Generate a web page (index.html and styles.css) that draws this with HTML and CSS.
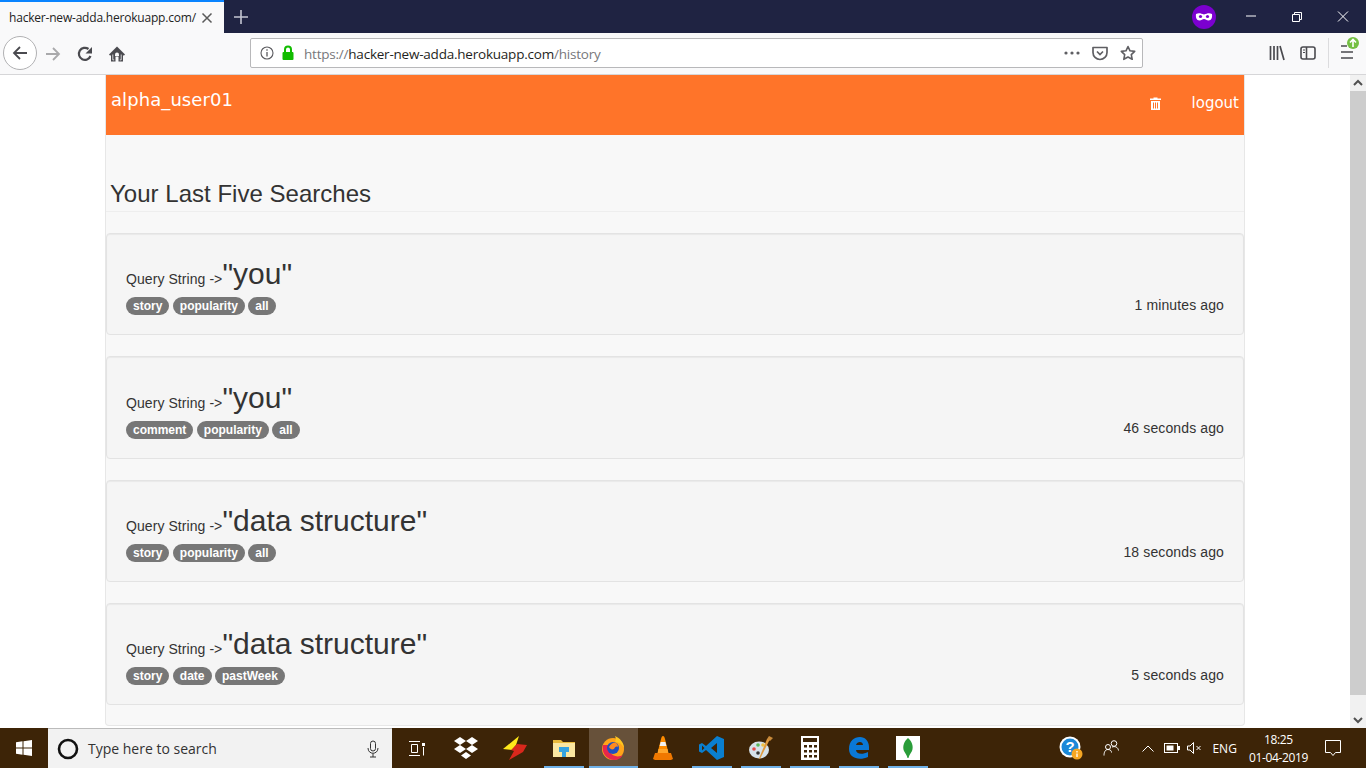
FILE: index.html
```html
<!DOCTYPE html>
<html lang="en">
<head>
    <meta charset="UTF-8">
    <title>hacker-new-adda.herokuapp.com/</title>
    <link rel="stylesheet" href="styles.css">
</head>
<body>
    <div class="tabbar">
        <div class="tab">
            <span class="tab-title">hacker-new-adda.herokuapp.com/</span>
            <svg class="tab-close" width="12" height="12" viewBox="0 0 12 12"><path d="M1.500 1.500l9 9M10.500 1.500l-9 9" stroke="#5a5a5a" stroke-width="1.500"/></svg>
        </div>
        <svg class="new-tab" width="16" height="16" viewBox="0 0 16 16"><path d="M8 1v14M1 8h14" stroke="#c4c6d2" stroke-width="1.600"/></svg>
        <div class="tabbar-right">
            <svg class="mask" width="24" height="24" viewBox="0 0 24 24"><circle cx="12" cy="12" r="12" fill="#7b00d0"/><path d="M4 9c3-1.500 5-.5 8 .5 3-1 5-2 8-.5 .5 3-.5 6.500-3.500 6.500-2 0-3-1.500-4.500-1.500s-2.500 1.500-4.500 1.500C4.500 15.500 3.500 12 4 9z" fill="#fff"/><circle cx="8.500" cy="11.500" r="1.600" fill="#7b00d0"/><circle cx="15.500" cy="11.500" r="1.600" fill="#7b00d0"/></svg>
            <svg width="46" height="32" viewBox="0 0 46 32"><path d="M18 15h10" stroke="#fff"/></svg>
            <svg width="46" height="32" viewBox="0 0 46 32"><path d="M18.500 13.500h7v7h-7zM20.500 13.500v-2h7v7h-2" fill="none" stroke="#fff"/></svg>
            <svg width="46" height="32" viewBox="0 0 46 32"><path d="M18 10.500l10 10M28 10.500l-10 10" stroke="#fff"/></svg>
        </div>
    </div>

    <div class="toolbar">
        <div class="back-btn">
            <svg width="18" height="18" viewBox="0 0 18 18"><path d="M16 9H3M9 3L3 9l6 6" fill="none" stroke="#4a4a4f" stroke-width="1.800"/></svg>
        </div>
        <svg class="tool-icon forward" width="18" height="18" viewBox="0 0 18 18"><path d="M2 9h13M9 3l6 6-6 6" fill="none" stroke="#a9a9ab" stroke-width="1.800"/></svg>
        <svg class="tool-icon" width="18" height="18" viewBox="0 0 18 18"><path d="M14.500 11A6 6 0 1 1 12.500 4" fill="none" stroke="#4a4a4f" stroke-width="2.200"/><path d="M16 2v6.500H9.500z" fill="#4a4a4f"/></svg>
        <svg class="tool-icon" width="18" height="18" viewBox="0 0 18 18"><path d="M9 1.500L17 9.500 15.800 10.800 15 10V16.500H10.500V11.500H7.500V16.500H3V10L2.200 10.800 1 9.500z" fill="#4a4a4f"/><path d="M7 11v-1.500a2 2 0 0 1 4 0V11z" fill="#f9f9fa"/><path d="M4.800 9.500v5.400h1.400M13.200 9.500v5.400h-1.400" fill="none" stroke="#f9f9fa" stroke-width=".8"/></svg>
        <div class="urlbar">
            <svg width="14" height="14" viewBox="0 0 14 14"><circle cx="7" cy="7" r="6" fill="none" stroke="#5a5a5e" stroke-width="1.100"/><path d="M7 6v4.500M7 3.300v1.500" stroke="#5a5a5e" stroke-width="1.300"/></svg>
            <svg width="14" height="16" viewBox="0 0 14 16"><rect x="1.500" y="7" width="11" height="8" rx="1" fill="#12bc00"/><path d="M4 7V4.500a3 3 0 0 1 6 0V7" fill="none" stroke="#12bc00" stroke-width="2"/></svg>
            <span class="url"><span class="dim">https://</span>hacker-new-adda.herokuapp.com<span class="dim">/history</span></span>
            <svg width="16" height="4" viewBox="0 0 16 4"><circle cx="2" cy="2" r="1.600" fill="#5f5f63"/><circle cx="8" cy="2" r="1.600" fill="#5f5f63"/><circle cx="14" cy="2" r="1.600" fill="#5f5f63"/></svg>
            <svg class="url-action" width="16" height="16" viewBox="0 0 16 16"><path d="M1 2.500h14v5a7 7 0 0 1-14 0z" fill="none" stroke="#5f5f63" stroke-width="1.700" stroke-linejoin="round"/><path d="M5 6.500l3 3 3-3" fill="none" stroke="#5f5f63" stroke-width="1.700"/></svg>
            <svg class="url-action" width="16" height="16" viewBox="0 0 16 16"><path d="M8 1.500l2 4.300 4.700.6-3.400 3.200.9 4.700L8 12l-4.200 2.300.9-4.700L1.300 6.400 6 5.800z" fill="none" stroke="#5f5f63" stroke-width="1.600" stroke-linejoin="round"/></svg>
        </div>
        <div class="toolbar-right">
            <svg width="16" height="16" viewBox="0 0 16 16"><path d="M1.500 1v14M5 1v14M8.500 1v14M11 1l4 14" fill="none" stroke="#4a4a4f" stroke-width="1.700"/></svg>
            <svg width="16" height="14" viewBox="0 0 16 14"><rect x="1" y="1" width="14" height="12" rx="2" fill="none" stroke="#4a4a4f" stroke-width="1.600"/><path d="M6.500 1v12" stroke="#4a4a4f" stroke-width="1.600"/><path d="M3 4h2M3 6.500h2" stroke="#4a4a4f"/></svg>
            <div class="toolbar-sep"></div>
            <svg class="menu-btn" width="20" height="24" viewBox="0 0 20 24"><path d="M0 10h6M0 16h12M0 22h12" stroke="#4a4a4f" stroke-width="1.700"/><circle cx="12" cy="7" r="6" fill="#74bf43"/><path d="M12 11V3.500M9 6.500l3-3 3 3" fill="none" stroke="#fff" stroke-width="1.600"/></svg>
        </div>
    </div>

    <div class="viewport">
        <div class="page">
            <div class="panel">
                <div class="navbar">
                    <span class="username">alpha_user01</span>
                    <div class="nav-right">
                        <svg width="11" height="13" viewBox="0 0 11 13"><path d="M3.500 1.500V.5h4v1h3.500V3H0V1.500zM1 4h9v9H1z" fill="#fff"/><path d="M3.500 5.500V11.500M5.500 5.500V11.500M7.500 5.500V11.500" stroke="#ff7429"/></svg>
                        <span>logout</span>
                    </div>
                </div>
                <h2 class="heading">Your Last Five Searches</h2>

                <div class="well">
                    <div>
                        <div class="query"><span class="query-label">Query String -&gt;</span><span class="query-text">"you"</span></div>
                        <div class="tags"><span class="tag">story</span><span class="tag">popularity</span><span class="tag">all</span></div>
                    </div>
                    <span class="time">1 minutes ago</span>
                </div>
                <div class="well">
                    <div>
                        <div class="query"><span class="query-label">Query String -&gt;</span><span class="query-text">"you"</span></div>
                        <div class="tags"><span class="tag">comment</span><span class="tag">popularity</span><span class="tag">all</span></div>
                    </div>
                    <span class="time">46 seconds ago</span>
                </div>
                <div class="well">
                    <div>
                        <div class="query"><span class="query-label">Query String -&gt;</span><span class="query-text">"data structure"</span></div>
                        <div class="tags"><span class="tag">story</span><span class="tag">popularity</span><span class="tag">all</span></div>
                    </div>
                    <span class="time">18 seconds ago</span>
                </div>
                <div class="well">
                    <div>
                        <div class="query"><span class="query-label">Query String -&gt;</span><span class="query-text">"data structure"</span></div>
                        <div class="tags"><span class="tag">story</span><span class="tag">date</span><span class="tag">pastWeek</span></div>
                    </div>
                    <span class="time">5 seconds ago</span>
                </div>
            </div>
        </div>
        <div class="scrollbar">
            <svg width="16" height="16" viewBox="0 0 16 16"><path d="M4 10l4-4 4 4" fill="none" stroke="#505050" stroke-width="2"/></svg>
            <div class="scroll-thumb"></div>
            <svg class="scroll-down" width="16" height="16" viewBox="0 0 16 16"><path d="M4 6l4 4 4-4" fill="none" stroke="#505050" stroke-width="2"/></svg>
        </div>
    </div>

    <div class="taskbar">
        <div class="start">
            <svg width="16" height="16" viewBox="0 0 16 16"><path d="M0 2.200l6.500-.9v6.200H0zM7.500 1.200L16 0v7.500H7.500zM0 8.500h6.500v6.200L0 13.800zM7.500 8.500H16V16l-8.500-1.200z" fill="#fff"/></svg>
        </div>
        <div class="search">
            <svg width="22" height="22" viewBox="0 0 22 22"><circle cx="11" cy="11" r="9" fill="none" stroke="#111" stroke-width="2.600"/></svg>
            <span class="search-text">Type here to search</span>
            <svg width="12" height="18" viewBox="0 0 12 18"><rect x="3.500" y="1" width="5" height="10" rx="2.500" fill="none" stroke="#333"/><path d="M1 8c0 7 10 7 10 0M6 13.500V17M3 17h6" fill="none" stroke="#333"/></svg>
        </div>
        <div class="task-icons">
            <div class="task-item"><svg width="16" height="15" viewBox="0 0 16 15"><path d="M0 .5h11M2.500 3.500h6v8h-6zM0 14.500h11M14.500 6v8.500" fill="none" stroke="#fff"/><rect x="13" y="2" width="3" height="3" fill="#fff"/></svg></div>
            <div class="task-item"><svg width="24" height="22" viewBox="0 0 24 22"><path d="M6 0l6 4-6 4-6-4zM18 0l6 4-6 4-6-4zM6 8l6 4-6 4-6-4zM18 8l6 4-6 4-6-4zM12 15l5 3.500-5 3.500-5-3.500z" fill="#fff"/></svg></div>
            <div class="task-item"><svg width="24" height="24" viewBox="0 0 24 24"><path d="M16 0L0 13l9 1 4-5z" fill="#ffe81a"/><path d="M14 8l10 1-4 7-14 8 5-9-3-1z" fill="#d8281c"/></svg></div>
            <div class="task-item is-open"><svg width="22" height="18" viewBox="0 0 22 18"><path d="M0 1h8l2 2h12v15H0z" fill="#e8b93c"/><path d="M0 4h22v14H0z" fill="#fbe6a0"/><path d="M6 8h10v5h-3v5H9v-5H6z" fill="#35a3e0"/></svg></div>
            <div class="task-item is-active"><svg width="22" height="24" viewBox="0 0 22 24"><circle cx="11" cy="13" r="11" fill="#ffa31a"/><path d="M1 9c-2 8 4 15 11 15 4 0 7-2 9-5-5 3-11 1-13-3-1-3 0-6 2-7z" fill="#e8274b"/><circle cx="11" cy="12" r="6" fill="#1f4fc0"/><path d="M11 7c3-1 5 1 5 4-2-1-3 0-4 2-2 1-4 0-5-2 1-2 2-3 4-4z" fill="#ff8a1f"/><path d="M13 0c5 2 9 7 9 12-2-4-5-6-9-6 1-2 1-4 0-6z" fill="#ffc51f"/></svg></div>
            <div class="task-item"><svg width="20" height="24" viewBox="0 0 20 24"><path d="M10 0c1 0 1.500 1 2 3l3 12H5L8 3c.5-2 1-3 2-3z" fill="#ff8c00"/><path d="M7.600 6h4.800l1 4H6.600z" fill="#f2f2f2"/><path d="M5.500 13h9l1 4h-11z" fill="#ffa52a"/><path d="M2 17h16l2 6-2 1H2l-2-1z" fill="#f07800"/></svg></div>
            <div class="task-item is-open"><svg width="25" height="24" viewBox="0 0 25 24"><path d="M18 0l7 3v18l-7 3L7 14l-4 3-3-1.500v-7L3 7l4 3z" fill="#0a7fd0"/><path d="M18 7l-6 5 6 5zM3 9.500v5L5.500 12z" fill="#3d2407"/></svg></div>
            <div class="task-item is-open"><svg width="24" height="24" viewBox="0 0 24 24"><ellipse cx="10" cy="14" rx="10" ry="8.500" fill="#d6e2ea"/><circle cx="5" cy="13" r="1.800" fill="#e54b4b"/><circle cx="9" cy="9" r="1.800" fill="#5cb85c"/><circle cx="14" cy="9" r="1.800" fill="#f0c040"/><circle cx="9" cy="17" r="1.800" fill="#333"/><path d="M21 3L11 23l-1-.5L18 3z" fill="#e09a3e"/><path d="M18 3l2-3 4 2-3 3z" fill="#c98a3a"/></svg></div>
            <div class="task-item is-open"><svg width="18" height="24" viewBox="0 0 18 24"><path d="M0 0h18v24H0z" fill="#fff"/><path d="M2 2h14v4H2z" fill="#3d2407"/><path d="M3 9h3v2.500H3zM8 9h3v2.500H8zM13 9h3v2.500h-3zM3 14h3v2.500H3zM8 14h3v2.500H8zM13 14h3v2.500h-3zM3 19h3v2.500H3zM8 19h3v2.500H8zM13 19h3v2.500h-3z" fill="#3d2407"/></svg></div>
            <div class="task-item is-open"><svg width="20" height="22" viewBox="0 0 20 22"><path d="M0 12C0 4 5 0 11 0c5 0 9 4 9 10v3H7c0 4 6 5 12 2v5c-9 4-19 1-19-8zM7 8h7c0-4-6-4-7 0z" fill="#0a78d6"/></svg></div>
            <div class="task-item is-open"><svg width="24" height="24" viewBox="0 0 24 24"><rect width="24" height="24" fill="#fff"/><path d="M12 2c3.500 3 6 8 4 13-1 2-3 4-3.500 7h-1C11 19 9 17 8 15 6 10 8.500 5 12 2z" fill="#2a9d3a"/></svg></div>
        </div>
        <div class="tray">
            <svg width="24" height="24" viewBox="0 0 24 24"><circle cx="11" cy="11" r="10.500" fill="#fff"/><circle cx="11" cy="11" r="8.500" fill="#1a88d8"/><text x="11" y="16" font-size="15" font-weight="bold" text-anchor="middle" fill="#fff" font-family="Liberation Sans">?</text><circle cx="18" cy="18" r="5.500" fill="#f5a623"/><path d="M18 15v1.500M18 17.500v3.500" stroke="#fff" stroke-width="1.300"/></svg>
            <svg class="people" width="16" height="16" viewBox="0 0 16 16"><circle cx="11" cy="3.500" r="2.800" fill="none" stroke="#fff"/><circle cx="5" cy="7" r="2.500" fill="none" stroke="#fff"/><path d="M1 15.500c0-3 1-6 4-6s3.500 2 3.500 3M9 7c3-1 6 0 6.500 3.500" fill="none" stroke="#fff"/></svg>
            <svg class="chev" width="12" height="7" viewBox="0 0 12 7"><path d="M.5 6.500l5.500-5.500 5.500 5.500" fill="none" stroke="#fff"/></svg>
            <svg class="batt" width="16" height="10" viewBox="0 0 16 10"><rect x=".5" y=".5" width="13" height="9" fill="none" stroke="#fff"/><rect x="2.500" y="2.500" width="7" height="5" fill="#fff"/><rect x="14" y="3" width="2" height="4" fill="#fff"/></svg>
            <svg class="vol" width="15" height="12" viewBox="0 0 15 12"><path d="M.5 4h2.500L6.500.5v11L3 8H.5z" fill="none" stroke="#fff"/><path d="M9.500 4l4 4M13.500 4l-4 4" stroke="#fff"/></svg>
            <span class="lang">ENG</span>
            <div class="clock"><span>18:25</span><span>01-04-2019</span></div>
            <svg class="notif" width="16" height="16" viewBox="0 0 16 16"><path d="M.5.500h15v12h-5l-2.500 3-2.500-3h-5z" fill="none" stroke="#fff"/></svg>
        </div>
    </div>
</body>
</html>
```

FILE: styles.css
```css
* {
    box-sizing: border-box;
}
html, body {
    height: 768px;
    margin: 0;
    overflow: hidden;
}
body {
    display: flex;
    flex-direction: column;
    background: #fff;
    font-family: "Liberation Sans", sans-serif;
    color: #333;
}

/* browser chrome */
.tabbar {
    display: flex;
    align-items: center;
    height: 33px;
    background: #1f2342;
}
.tab {
    display: flex;
    align-items: center;
    justify-content: space-between;
    width: 224px;
    height: 33px;
    padding: 0 11px 0 9px;
    background: #f9f9fa;
    border-top: 2px solid #0a84ff;
    font-family: "Open Sans", sans-serif;
    font-size: 12px;
    color: #222;
}
.tab-title {
    white-space: nowrap;
    letter-spacing: -0.2px;
}
.new-tab {
    margin-left: 9px;
}
.tabbar-right {
    display: flex;
    align-items: center;
    margin-left: auto;
}
.mask {
    margin-right: 12px;
}
.toolbar {
    display: flex;
    align-items: center;
    height: 42px;
    padding: 0 0 1px 3px;
    background: #f9f9fa;
    border-bottom: 1px solid #d6d6d8;
}
.back-btn {
    display: flex;
    align-items: center;
    justify-content: center;
    width: 34px;
    height: 34px;
    border: 1px solid #b1b1b3;
    border-radius: 50%;
    background: #fff;
}
.tool-icon {
    margin: 1px 0 0 14px;
}
.tool-icon.forward {
    margin-left: 7px;
}
.urlbar {
    display: flex;
    align-items: center;
    gap: 7px;
    width: 893px;
    height: 30px;
    margin-left: 124px;
    padding: 0 6px 0 9px;
    background: #fff;
    border: 1px solid #b8b8ba;
    border-radius: 2px;
    font-family: "Open Sans", sans-serif;
    font-size: 13.5px;
}
.url {
    flex: 1;
    margin-left: 2px;
    padding-top: 1px;
    color: #1f1f22;
    letter-spacing: -0.22px;
    white-space: nowrap;
}
.url .dim {
    color: #77777b;
}
.url-action {
    margin-left: 5px;
}
.toolbar-right {
    display: flex;
    align-items: center;
    gap: 15px;
    margin-left: 126px;
}
.toolbar-sep {
    width: 1px;
    height: 30px;
    margin-left: -3px;
    background: #dcdcde;
}
.menu-btn {
    margin: -10px 0 0 -3px;
}

/* page */
.viewport {
    display: flex;
    height: 653px;
}
.page {
    flex: 1;
    padding: 0 105px;
    overflow: hidden;
}
.panel {
    height: 651px;
    background: #f8f8f8;
    border: 1px solid #e7e7e7;
    border-top: 0;
    border-radius: 0 0 4px 4px;
}
.navbar {
    display: flex;
    justify-content: space-between;
    height: 60px;
    padding: 14px 5px 0 5px;
    background: #ff7429;
    color: #fff;
    font-family: "DejaVu Sans", sans-serif;
}
.username {
    font-size: 18px;
    letter-spacing: 0.08px;
}
.nav-right {
    display: flex;
    align-items: center;
    height: 28px;
    gap: 30px;
    font-size: 15px;
}
.nav-right svg {
    margin-right: 1px;
}
.heading {
    height: 77.2px;
    margin: 0;
    padding: 45px 0 0 4px;
    border-bottom: 1px solid #eee;
    font-size: 24px;
    font-weight: 400;
    line-height: 28px;
    letter-spacing: 0.02px;
}
.well {
    display: flex;
    justify-content: space-between;
    align-items: flex-end;
    height: 102.3px;
    margin-top: 21px;
    padding: 19px;
    background: #f5f5f5;
    border: 1px solid #e3e3e3;
    border-radius: 4px;
    box-shadow: inset 0 1px 1px rgba(0, 0, 0, 0.05);
}
.query {
    display: flex;
    align-items: baseline;
    height: 34px;
    line-height: 34px;
}
.query-label {
    font-size: 14px;
    letter-spacing: 0.07px;
}
.query-text {
    font-size: 30px;
}
.tags {
    display: flex;
    gap: 3.5px;
    margin-top: 6px;
}
.tag {
    padding: 3px 7px;
    background: #777;
    border-radius: 10px;
    color: #fff;
    font-size: 12px;
    font-weight: 700;
    line-height: 12px;
}
.time {
    margin-bottom: 0.5px;
    font-size: 14px;
    line-height: 20px;
    letter-spacing: 0.12px;
}
.scrollbar {
    display: flex;
    flex-direction: column;
    width: 16px;
    background: #f1f1f1;
}
.scroll-thumb {
    height: 604px;
    background: #cdcdcd;
}
.scroll-down {
    margin-top: auto;
}

/* windows taskbar */
.taskbar {
    display: flex;
    height: 40px;
    background: #3d2407;
    color: #fff;
    font-family: "Open Sans", sans-serif;
}
.start {
    display: flex;
    align-items: center;
    justify-content: center;
    width: 48px;
}
.search {
    display: flex;
    align-items: center;
    gap: 9px;
    width: 344px;
    padding: 0 13px 0 9px;
    background: #f2f2f2;
    border-top: 1px solid #bbb;
    color: #333;
    font-size: 14px;
}
.search-text {
    flex: 1;
}
.task-icons {
    display: flex;
}
.task-item {
    display: flex;
    align-items: center;
    justify-content: center;
    width: 49.2px;
    height: 40px;
}
.task-item.is-open {
    background: linear-gradient(#6fb1e8, #6fb1e8) center bottom / 40px 2px no-repeat;
}
.task-item.is-active {
    background: linear-gradient(#6fb1e8, #6fb1e8) left bottom / 100% 2px no-repeat, #67513a;
}
.tray {
    display: flex;
    align-items: center;
    margin-left: auto;
    padding-right: 25px;
    font-size: 12px;
}
.people {
    margin-left: 19.6px;
}
.chev {
    margin-left: 23.4px;
}
.batt {
    margin-left: 10px;
}
.vol {
    margin-left: 6.5px;
}
.lang {
    margin-left: 10.5px;
}
.clock {
    display: flex;
    flex-direction: column;
    align-items: center;
    gap: 3px;
    margin-left: 12px;
    line-height: 15px;
    letter-spacing: -0.35px;
}
.notif {
    margin-left: 17px;
}
```
